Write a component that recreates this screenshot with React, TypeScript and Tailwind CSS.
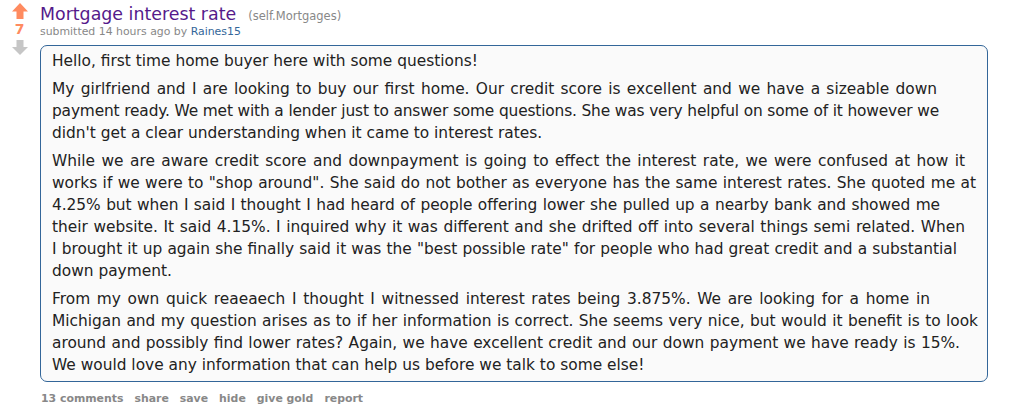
import React from "react";

type Line = { t: string; c: string };

const paragraphs: Line[][] = [
  [{ t: "Hello, first time home buyer here with some questions!", c: "" }],
  [
    {
      t: "My girlfriend and I are looking to buy our first home. Our credit score is excellent and we have a sizeable down",
      c: "w-[885px] text-justify [text-align-last:justify]",
    },
    {
      t: "payment ready. We met with a lender just to answer some questions. She was very helpful on some of it however we",
      c: "w-[887px] text-justify [text-align-last:justify] tracking-[-0.16px]",
    },
    { t: "didn't get a clear understanding when it came to interest rates.", c: "" },
  ],
  [
    {
      t: "While we are aware credit score and downpayment is going to effect the interest rate, we were confused at how it",
      c: "w-[913px] text-justify [text-align-last:justify]",
    },
    {
      t: 'works if we were to "shop around". She said do not bother as everyone has the same interest rates. She quoted me at',
      c: "w-[924px] text-justify [text-align-last:justify]",
    },
    {
      t: "4.25% but when I said I thought I had heard of people offering lower she pulled up a nearby bank and showed me",
      c: "w-[888px] text-justify [text-align-last:justify] tracking-[-0.05px]",
    },
    {
      t: "their website. It said 4.15%. I inquired why it was different and she drifted off into several things semi related. When",
      c: "w-[913px] text-justify [text-align-last:justify]",
    },
    {
      t: 'I brought it up again she finally said it was the "best possible rate" for people who had great credit and a substantial',
      c: "w-[905px] text-justify [text-align-last:justify]",
    },
    { t: "down payment.", c: "" },
  ],
  [
    {
      t: "From my own quick reaeaech I thought I witnessed interest rates being 3.875%. We are looking for a home in",
      c: "w-[878px] text-justify [text-align-last:justify]",
    },
    {
      t: "Michigan and my question arises as to if her information is correct. She seems very nice, but would it benefit is to look",
      c: "w-[926px] text-justify [text-align-last:justify]",
    },
    {
      t: "around and possibly find lower rates? Again, we have excellent credit and our down payment we have ready is 15%.",
      c: "w-[908px] text-justify [text-align-last:justify]",
    },
    { t: "We would love any information that can help us before we talk to some else!", c: "" },
  ],
];

function UpArrow() {
  return (
    <svg width="16" height="16" viewBox="0 0 16 16">
      <path d="M8 0 L16 8.5 L11.5 8.5 L11.5 16 L4.5 16 L4.5 8.5 L0 8.5 Z" fill="#ff8b60" />
    </svg>
  );
}

function DownArrow() {
  return (
    <svg width="16" height="15" viewBox="0 0 16 15">
      <path d="M4.5 0 L11.5 0 L11.5 7 L16 7 L8 15 L0 7 L4.5 7 Z" fill="#c6c6c6" />
    </svg>
  );
}

export default function App() {
  return (
    <div
      className="flex bg-white w-[1018px] h-[413px] text-[#222]"
      style={{ fontFamily: "'DejaVu Sans', Verdana, sans-serif" }}
    >
      <div className="w-[39px] flex flex-col items-center pt-[3px] shrink-0">
        <UpArrow />
        <div className="text-[14px] font-bold leading-[21px] text-[#ff8b60]">7</div>
        <DownArrow />
      </div>
      <div className="ml-[1px] flex flex-col">
        <div className="flex items-baseline mt-[3px] h-[22px] leading-[22px] overflow-visible">
          <span className="text-[17.4px] text-[#551a8b]">Mortgage interest rate</span>
          <span className="ml-[12px] text-[11.5px] text-[#888]">(self.Mortgages)</span>
        </div>
        <div className="text-[10.9px] leading-[13px] text-[#888]">
          submitted 14 hours ago by <span className="text-[#369]">Raines15</span>
        </div>
        <div className="mt-[7px] w-[948px] border border-[#369] rounded-[7px] bg-[#fafafa] pl-[11px] pr-[11px] pt-[4px] pb-[5px] text-[15.4px] leading-[22px] flex flex-col gap-[6px]">
          {paragraphs.map((p, i) => (
            <p key={i}>
              {p.map((line, j) => (
                <span key={j} className={"block " + line.c}>
                  {line.t}
                </span>
              ))}
            </p>
          ))}
        </div>
        <div className="mt-[10px] flex gap-[11px] text-[10.9px] leading-[14px] font-bold text-[#888] pl-[1px]">
          <span>13 comments</span>
          <span>share</span>
          <span>save</span>
          <span>hide</span>
          <span>give gold</span>
          <span>report</span>
        </div>
      </div>
    </div>
  );
}
